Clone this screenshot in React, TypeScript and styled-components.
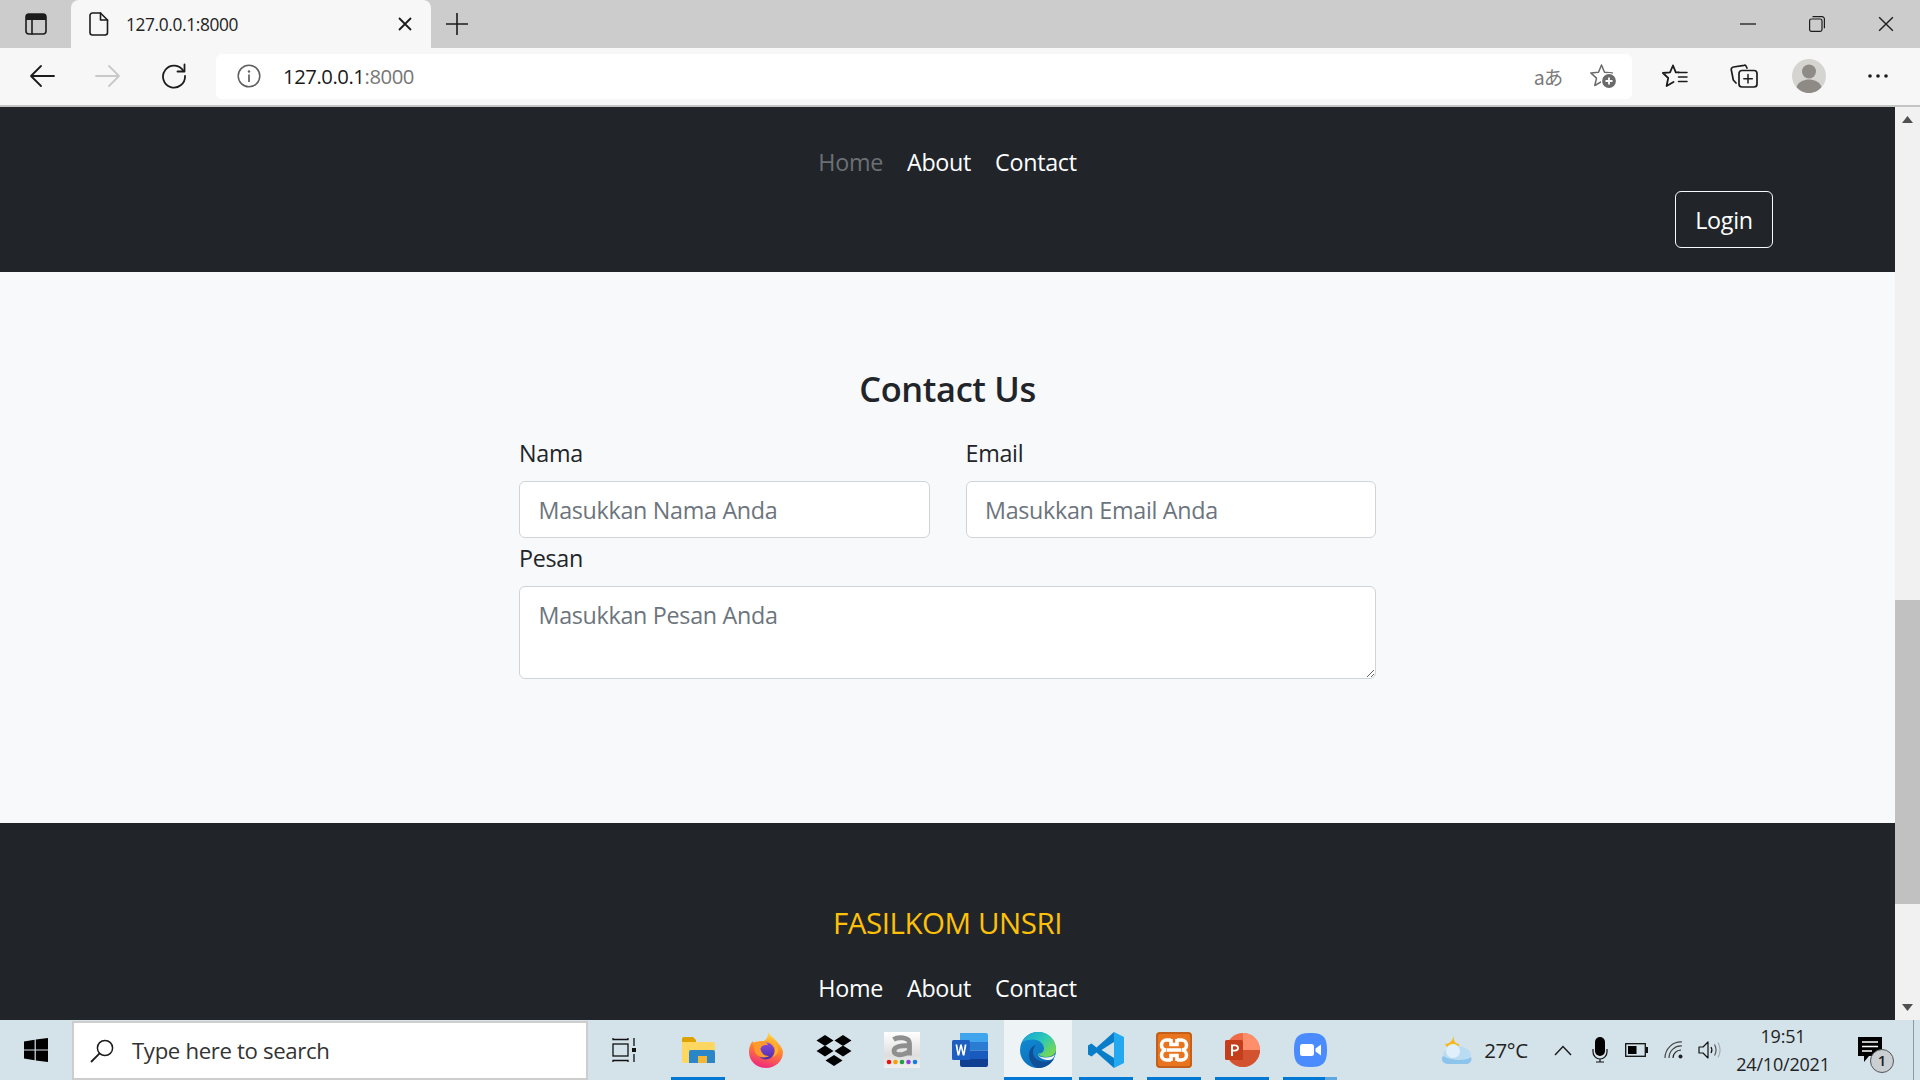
import React from "react";
import styled, { createGlobalStyle } from "styled-components";

const Global = createGlobalStyle`
  html, body { margin: 0; padding: 0; background: #f8f9fa; overflow: hidden; }
  * { box-sizing: border-box; }
  #root { width: 1920px; height: 1080px; }
`;

const UI = `"Open Sans", "Noto Sans", "Liberation Sans", sans-serif`;

const Screen = styled.div`
  width: 1920px;
  height: 1080px;
  display: flex;
  flex-direction: column;
  overflow: hidden;
  font-family: ${UI};
`;

/* ---------- browser chrome ---------- */
const TabStrip = styled.div`
  height: 48px;
  flex: none;
  background: #cccccc;
  display: flex;
  align-items: center;
`;
const StripButton = styled.div<{ $w: number }>`
  width: ${(p) => p.$w}px;
  height: 48px;
  flex: none;
  display: flex;
  align-items: center;
  justify-content: center;
`;
const Tab = styled.div`
  width: 360px;
  height: 48px;
  flex: none;
  background: #f7f7f7;
  border-radius: 8px 8px 0 0;
  display: flex;
  align-items: center;
  padding: 0 19px 0 18px;
`;
const TabTitle = styled.span`
  font-size: 17.3px;
  letter-spacing: -0.35px;
  color: #222;
  margin-left: 17px;
  flex: 1;
`;
const StripFill = styled.div`
  flex: 1;
`;
const Toolbar = styled.div`
  height: 59px;
  flex: none;
  background: #f7f7f7;
  border-bottom: 2px solid #c4c4c4;
  display: flex;
  align-items: center;
  padding-bottom: 1px;
`;
const ToolButton = styled.div<{ $w: number }>`
  width: ${(p) => p.$w}px;
  flex: none;
  display: flex;
  align-items: center;
  justify-content: center;
`;
const AddressBar = styled.div`
  width: 1416px;
  height: 45px;
  flex: none;
  background: #fff;
  border-radius: 6px;
  display: flex;
  align-items: center;
`;
const UrlText = styled.span`
  font-size: 20.3px;
  letter-spacing: -0.45px;
  color: #1a1a1a;
  margin-left: 1px;
  flex: 1;
`;
const UrlPort = styled.span`
  color: #767676;
`;
const TranslateGlyph = styled.span`
  font-family: "Noto Sans CJK JP", "Open Sans", sans-serif;
  font-size: 19.5px;
  letter-spacing: -1px;
  color: #7a7a7a;
  width: 52px;
  text-align: center;
`;

/* ---------- page ---------- */
const Viewport = styled.div`
  flex: 1;
  min-height: 0;
  display: flex;
`;
const Page = styled.div`
  flex: 1;
  min-width: 0;
  display: flex;
  flex-direction: column;
  overflow: hidden;
`;
const NavBar = styled.header`
  height: 165px;
  flex: none;
  background: #212529;
  display: flex;
  flex-direction: column;
  padding: 35px 122px 0 0;
`;
const NavLinks = styled.nav`
  display: flex;
  justify-content: center;
  gap: 24px;
  height: 40px;
  align-items: center;
`;
const NavLink = styled.a<{ $muted?: boolean }>`
  font-size: 23.3px;
  letter-spacing: -0.3px;
  color: ${(p) => (p.$muted ? "#6c7075" : "#fff")};
  text-decoration: none;
`;
const NavLinksOffset = styled.div`
  margin-right: -122px;
`;
const LoginRow = styled.div`
  display: flex;
  justify-content: flex-end;
  margin-top: 9px;
`;
const LoginButton = styled.button`
  width: 98px;
  height: 57px;
  background: transparent;
  border: 1.5px solid #f8f9fa;
  border-radius: 6px;
  color: #fff;
  font-family: ${UI};
  font-size: 23.3px;
  letter-spacing: -0.3px;
  padding: 1px 0 0;
`;
const Main = styled.main`
  height: 551px;
  flex: none;
  background: #f8f9fa;
  display: flex;
  flex-direction: column;
  align-items: center;
  padding-top: 92px;
`;
const Heading = styled.h2`
  margin: 0;
  font-size: 34.4px;
  line-height: 50px;
  font-weight: 600;
  letter-spacing: -0.35px;
  color: #212529;
`;
const Form = styled.form`
  width: 857px;
  margin-top: 21px;
  display: grid;
  grid-template-columns: 1fr 1fr;
  column-gap: 36px;
`;
const Field = styled.div<{ $wide?: boolean }>`
  grid-column: ${(p) => (p.$wide ? "1 / -1" : "auto")};
  margin-top: ${(p) => (p.$wide ? 2 : 0)}px;
  display: flex;
  flex-direction: column;
`;
const Label = styled.label`
  font-size: 23.3px;
  letter-spacing: -0.3px;
  line-height: 36px;
  color: #212529;
  margin-bottom: 10px;
`;
const fieldBase = `
  border: 1.5px solid #ced4da;
  border-radius: 6px;
  background: #fff;
  font-family: ${UI};
  font-size: 23.3px;
  letter-spacing: -0.3px;
  color: #212529;
  padding: 9px 18.5px;
  outline: none;
  width: 100%;
  &::placeholder { color: #6c757d; opacity: 1; }
`;
const TextInput = styled.input`
  ${fieldBase}
  height: 57px;
`;
const TextArea = styled.textarea`
  ${fieldBase}
  padding-top: 12px;
  height: 93px;
  resize: vertical;
  display: block;
`;
const Footer = styled.footer`
  flex: 1;
  background: #212529;
  display: flex;
  flex-direction: column;
  align-items: center;
  padding-top: 77px;
`;
const Brand = styled.div`
  font-size: 29.5px;
  letter-spacing: -0.45px;
  line-height: 46px;
  color: #ffc107;
`;
const FooterLinks = styled(NavLinks)`
  margin-top: 22px;
`;

/* ---------- scrollbar ---------- */
const ScrollBar = styled.div`
  width: 25px;
  flex: none;
  background: #f1f1f1;
  display: flex;
  flex-direction: column;
  align-items: center;
`;
const ScrollArrow = styled.div`
  height: 25px;
  flex: none;
  display: flex;
  align-items: center;
  justify-content: center;
`;
const ScrollSpacer = styled.div<{ $h: number }>`
  height: ${(p) => p.$h}px;
  flex: none;
`;
const ScrollThumb = styled.div`
  width: 100%;
  height: 304px;
  flex: none;
  background: #c1c1c1;
`;

/* ---------- taskbar ---------- */
const Taskbar = styled.div`
  height: 60px;
  flex: none;
  background: #d4e2ea;
  display: flex;
  align-items: stretch;
  position: relative;
`;
const StartButton = styled.div`
  width: 72px;
  flex: none;
  display: flex;
  align-items: center;
  justify-content: center;
`;
const SearchBox = styled.div`
  width: 516px;
  flex: none;
  margin-top: 1px;
  background: #fff;
  border: 2px solid #cdcdcd;
  display: flex;
  align-items: center;
  padding-left: 16px;
`;
const SearchText = styled.span`
  font-size: 22.2px;
  letter-spacing: -0.35px;
  color: #333;
  margin-left: 18px;
`;
const TaskViewButton = styled.div`
  width: 68px;
  flex: none;
  margin-left: 2px;
  margin-right: 6px;
  display: flex;
  align-items: center;
  justify-content: center;
`;
const TaskButton = styled.div<{ $open?: boolean; $active?: boolean; $stacked?: boolean }>`
  width: 68px;
  flex: none;
  position: relative;
  display: flex;
  align-items: center;
  justify-content: center;
  background: ${(p) => (p.$active ? "#eef3f6" : "transparent")};
  &::after {
    content: "";
    display: ${(p) => (p.$open ? "block" : "none")};
    position: absolute;
    bottom: 0;
    left: ${(p) => (p.$active ? 0 : 7)}px;
    right: ${(p) => (p.$active ? 0 : 7)}px;
    height: 3px;
    background: ${(p) =>
      p.$stacked ? "linear-gradient(90deg, #0078d4 78%, #5fa8e0 78%)" : "#0078d4"};
  }
`;
const Tray = styled.div`
  margin-left: auto;
  display: flex;
  align-items: stretch;
  padding-right: 20px;
  position: relative;
`;
const TrayItem = styled.div<{ $w: number }>`
  width: ${(p) => p.$w}px;
  flex: none;
  display: flex;
  align-items: center;
  justify-content: center;
  position: relative;
`;
const TempText = styled.span`
  font-size: 20.5px;
  letter-spacing: -0.4px;
  color: #222;
  margin-right: 8px;
`;
const Clock = styled.div`
  display: flex;
  flex-direction: column;
  align-items: center;
  font-size: 18px;
  letter-spacing: -0.2px;
  line-height: 28px;
  color: #222;
`;
const NotifBadge = styled.span`
  position: absolute;
  left: 31px;
  top: 29px;
  width: 24px;
  height: 24px;
  border-radius: 50%;
  background: #c9cfd2;
  border: 1.5px solid #555;
  font-size: 15px;
  font-weight: 600;
  line-height: 20px;
  text-align: center;
  color: #222;
`;
const EdgeLine = styled.div`
  position: absolute;
  right: 6px;
  top: 0;
  bottom: 0;
  width: 1px;
  background: #8f9a9f;
`;

/* ---------- icons ---------- */
const Stroke = { fill: "none", stroke: "#1c1c1c", strokeWidth: 1.6, strokeLinecap: "round" as const, strokeLinejoin: "round" as const };

const SidebarIcon = () => (
  <svg width="22" height="22" viewBox="0 0 22 22">
    <rect x="1" y="1" width="20" height="20" rx="3" {...Stroke} />
    <path d="M1 4a3 3 0 0 1 3-3h14a3 3 0 0 1 3 3v3H1z" fill="#1c1c1c" />
    <path d="M7 7v14" {...Stroke} />
  </svg>
);
const FileIcon = () => (
  <svg width="20" height="24" viewBox="0 0 20 24">
    <path d="M3.500 1h8l7 7v12.500a2.500 2.500 0 0 1-2.500 2.500H3.500A2.500 2.500 0 0 1 1 20.500V3.500A2.500 2.500 0 0 1 3.500 1z" {...Stroke} />
    <path d="M11.500 1v7h7" {...Stroke} />
  </svg>
);
const CloseX = ({ s = 14, w = 1.8 }: { s?: number; w?: number }) => (
  <svg width={s} height={s} viewBox="0 0 14 14">
    <path d="M1 1l12 12M13 1L1 13" fill="none" stroke="#1c1c1c" strokeWidth={w} />
  </svg>
);
const PlusIcon = () => (
  <svg width="22" height="22" viewBox="0 0 22 22">
    <path d="M11 0v22M0 11h22" fill="none" stroke="#1c1c1c" strokeWidth="1.6" />
  </svg>
);
const MinIcon = () => (
  <svg width="16" height="2" viewBox="0 0 16 2">
    <path d="M0 1h16" stroke="#1c1c1c" strokeWidth="1.3" />
  </svg>
);
const RestoreIcon = () => (
  <svg width="16" height="16" viewBox="0 0 16 16">
    <rect x="0.600" y="3" width="12.400" height="12.400" rx="1.800" fill="none" stroke="#1c1c1c" strokeWidth="1.200" />
    <path d="M3.500 0.700h9.500a2.400 2.400 0 0 1 2.400 2.400v9.200" fill="none" stroke="#1c1c1c" strokeWidth="1.200" />
  </svg>
);
const ArrowIcon = ({ dir, color }: { dir: "l" | "r"; color: string }) => (
  <svg width="26" height="24" viewBox="0 0 26 24" style={dir === "r" ? { transform: "scaleX(-1)" } : undefined}>
    <path d="M25 12H2M12 2L2 12l10 10" fill="none" stroke={color} strokeWidth="1.800" strokeLinecap="round" strokeLinejoin="round" />
  </svg>
);
const RefreshIcon = () => (
  <svg width="26" height="26" viewBox="0 0 26 26">
    <path d="M22.500 8A11 11 0 1 0 24 13" {...Stroke} strokeWidth={1.8} />
    <path d="M23.500 1.500V8.500H16.500" {...Stroke} strokeWidth={1.8} />
  </svg>
);
const InfoIcon = () => (
  <svg width="24" height="24" viewBox="0 0 24 24">
    <circle cx="12" cy="12" r="10.800" fill="none" stroke="#5f5f5f" strokeWidth="1.500" />
    <circle cx="12" cy="7.500" r="1.200" fill="#5f5f5f" />
    <path d="M12 10.500v7.500" stroke="#5f5f5f" strokeWidth="1.700" />
  </svg>
);
const StarPlusIcon = () => (
  <svg width="26" height="24" viewBox="0 0 26 24">
    <path d="M11.500 1l3 7.200 7.800.7-5.800 5.200 1.700 7.400-6.700-3.900-6.700 3.900 1.700-7.400L.8 8.900l7.700-.7z" fill="none" stroke="#6a6a6a" strokeWidth="1.500" strokeLinejoin="round" />
    <circle cx="19" cy="17" r="7.500" fill="#6a6a6a" stroke="#fff" strokeWidth="1.200" />
    <path d="M19 13.500v7M15.500 17h7" stroke="#fff" strokeWidth="1.800" />
  </svg>
);
const FavoritesIcon = () => (
  <svg width="26" height="24" viewBox="0 0 26 24">
    <path d="M11 1.500L8 8.300.9 9l5.300 5-1.600 8 6.900-4M11 1.500l2.800 6.800h3" {...Stroke} strokeWidth={1.800} />
    <path d="M16.500 8.500h8.500M16.500 13h8.500M16.500 17.500h8.500" {...Stroke} strokeWidth={1.500} />
  </svg>
);
const CollectionsIcon = () => (
  <svg width="28" height="24" viewBox="0 0 28 24">
    <rect x="9" y="6.500" width="18" height="16.500" rx="3" {...Stroke} strokeWidth={1.700} />
    <path d="M18 10.500v8.500M13.800 14.800h8.500" {...Stroke} strokeWidth={1.500} />
    <path d="M17 4l-.7-1.500c-.4-1-1.200-1.500-2.200-1.200L3.500 3C2 3.300 1 4.500 1.300 6l2 10 2.700 3" {...Stroke} strokeWidth={1.700} />
  </svg>
);
const AvatarIcon = () => (
  <svg width="34" height="34" viewBox="0 0 34 34">
    <circle cx="17" cy="17" r="17" fill="#d6d4d1" />
    <circle cx="17" cy="12.500" r="7" fill="#8e8a86" />
    <path d="M4.500 28c2-5.500 7.500-7.500 12.500-7.500s10.500 2 12.500 7.500c-3 3.700-7.500 6-12.500 6S7.500 31.700 4.500 28z" fill="#8e8a86" />
  </svg>
);
const DotsIcon = () => (
  <svg width="20" height="4" viewBox="0 0 20 4">
    <circle cx="2" cy="2" r="1.800" fill="#1c1c1c" />
    <circle cx="10" cy="2" r="1.800" fill="#1c1c1c" />
    <circle cx="18" cy="2" r="1.800" fill="#1c1c1c" />
  </svg>
);
const Triangle = ({ up }: { up?: boolean }) => (
  <svg width="11" height="7" viewBox="0 0 11 7">
    <path d={up ? "M5.500 0L11 7H0z" : "M0 0h11L5.500 7z"} fill="#505050" />
  </svg>
);
const WindowsLogo = () => (
  <svg width="24" height="24" viewBox="0 0 24 24">
    <path d="M0 3.400L10.600 1.800V11.400H0zM11.800 1.600L24 0V11.400H11.800zM0 12.600H10.600V22.200L0 20.600zM11.800 12.600H24V24L11.800 22.400z" fill="#000" />
  </svg>
);
const SearchIcon = () => (
  <svg width="24" height="24" viewBox="0 0 24 24">
    <circle cx="15" cy="9" r="7.600" fill="none" stroke="#1c1c1c" strokeWidth="1.500" />
    <path d="M9.600 14.400L1 23" stroke="#1c1c1c" strokeWidth="1.800" />
  </svg>
);
const TaskViewIcon = () => (
  <svg width="24" height="26" viewBox="0 0 24 26">
    <path d="M1 1v1.500h15V1M1 25v-1.500h15V25" fill="none" stroke="#111" strokeWidth="1.300" />
    <rect x="1" y="7" width="15" height="12" fill="none" stroke="#111" strokeWidth="1.300" />
    <path d="M22 1v8M22 17v8" stroke="#111" strokeWidth="1.300" />
    <rect x="20" y="11" width="4" height="4" fill="#111" />
  </svg>
);
const FolderLogo = () => (
  <svg width="33" height="26" viewBox="0 0 33 26">
    <path d="M0 2a2 2 0 0 1 2-2h9l3 3v3H0z" fill="#dfa200" />
    <path d="M0 5h31a2 2 0 0 1 2 2v19H2a2 2 0 0 1-2-2z" fill="#fdd75f" />
    <path d="M7 26V15a2 2 0 0 1 2-2h22a2 2 0 0 1 2 2v11h-8v-7h-9v7z" fill="#2a86c8" />
    <path d="M16 19h9v7h-9z" fill="#f4b733" />
  </svg>
);
const FirefoxLogo = () => (
  <svg width="34" height="36" viewBox="0 0 34 36">
    <defs>
      <linearGradient id="ff1" x1="0.700" y1="0" x2="0.400" y2="1">
        <stop offset="0" stopColor="#ffe03b" />
        <stop offset="0.450" stopColor="#ff8a2b" />
        <stop offset="1" stopColor="#f0277f" />
      </linearGradient>
      <linearGradient id="ff2" x1="0.500" y1="0" x2="0.500" y2="1">
        <stop offset="0" stopColor="#8a4ad8" />
        <stop offset="1" stopColor="#4a2fa8" />
      </linearGradient>
    </defs>
    <path d="M19 0c1.500 3.500 5 5 8 8.500 4 4.500 7 8.500 7 11.500 0 9-7.500 16-17 16S0 29 0 20c0-5 1.500-8.500 4-11 .3 2 1 3 2 3.500C8 10 11 9 15 9c3-2 4.500-5 4-9z" fill="url(#ff1)" />
    <circle cx="17" cy="19" r="8.500" fill="url(#ff2)" />
    <path d="M4 11c4-2.500 13-3 15 2-4-.5-6.500 1-7.500 3.500C12 21 15 24 20 24c-5 3-12 1-14-4-1-3-1.500-6-2-9z" fill="#ff9a2b" />
    <path d="M24 11c3 4 3 11-1 14 5-1 7-6 6-10-1-2-3-4-5-4z" fill="#ffb02e" />
  </svg>
);
const DropboxLogo = () => (
  <svg width="36" height="31" viewBox="0 0 36 31">
    <path d="M9 0l8.500 5.500L9 11 .5 5.500zM27 0l8.500 5.500L27 11l-8.500-5.500zM9 10.500l8.500 5.500L9 21.500.5 16zM27 10.500l8.500 5.500-8.500 5.500-8.500-5.500zM18 20l8.500 5.500L18 31l-8.500-5.500z" fill="#000" />
  </svg>
);
const AmazonLogo = () => (
  <svg width="36" height="36" viewBox="0 0 36 36">
    <defs>
      <linearGradient id="amz" x1="0" y1="0" x2="0" y2="1">
        <stop offset="0" stopColor="#ffffff" />
        <stop offset="0.650" stopColor="#dedede" />
        <stop offset="1" stopColor="#f0f0f0" />
      </linearGradient>
    </defs>
    <rect width="36" height="36" fill="url(#amz)" />
    <path d="M9.500 7.500c4-2.500 16-3 16 4v12M25.500 13.500c-9 0-15.500 1-15.500 5.500 0 5 10 5 15.500 0" fill="none" stroke="#8f8f8f" strokeWidth="4.800" />
    <circle cx="5" cy="30" r="2.300" fill="#f01010" />
    <circle cx="11.500" cy="30" r="2.300" fill="#f5a000" />
    <circle cx="18" cy="30" r="2.300" fill="#20a040" />
    <circle cx="24.500" cy="30" r="2.300" fill="#9040d8" />
    <circle cx="31" cy="30" r="2.300" fill="#1080e0" />
  </svg>
);
const WordLogo = () => (
  <svg width="36" height="34" viewBox="0 0 36 34">
    <path d="M8 0h26a2 2 0 0 1 2 2v7H8z" fill="#41a5ee" />
    <path d="M8 9h28v8.500H8z" fill="#2b7cd3" />
    <path d="M8 17.500h28V26H8z" fill="#185abd" />
    <path d="M8 26h28v6a2 2 0 0 1-2 2H10a2 2 0 0 1-2-2z" fill="#103f91" />
    <rect x="0" y="7" width="18" height="20" rx="1.500" fill="#1c5fc0" />
    <path d="M3.500 11.500l2 11h1.800l1.700-7.500 1.700 7.500h1.800l2-11h-1.800l-1.200 7.500-1.700-7.500h-1.600l-1.700 7.500-1.200-7.500z" fill="#fff" />
  </svg>
);
const EdgeLogo = () => (
  <svg width="36" height="36" viewBox="0 0 36 36">
    <defs>
      <linearGradient id="edge1" x1="0" y1="0" x2="1" y2="0.700">
        <stop offset="0" stopColor="#18a0d8" />
        <stop offset="0.550" stopColor="#2cc8b8" />
        <stop offset="1" stopColor="#78d850" />
      </linearGradient>
      <linearGradient id="edge2" x1="0" y1="0" x2="0.500" y2="1">
        <stop offset="0" stopColor="#1290d8" />
        <stop offset="1" stopColor="#0c6cb8" />
      </linearGradient>
    </defs>
    <circle cx="18" cy="18" r="18" fill="url(#edge2)" />
    <path d="M2 10C5 4 11 0 18 0c10 0 18 7 18 17 0 5-4 8-10 8-4 0-7-1.500-8-3.500 3 .5 6-1.500 6-5 0-5-5-9-11-9-5 0-9 1-11 2.500z" fill="url(#edge1)" />
    <path d="M16 13c-4 1-7 5-7 10 0 5 3 10 8 13 8 0 13-3 17-9-3 2-7 3-11 2.500C17 29 13 25 13 20c0-3 1-5 3-7z" fill="#0f4f98" />
    <path d="M17.500 22c1 2.500 4.500 3.500 8.500 3.500 4 0 7-1 9-3-1 3.500-3 5.500-6 5.500-5 0-10-2-11.500-6z" fill="#eef3f6" />
  </svg>
);
const VsCodeLogo = () => (
  <svg width="36" height="36" viewBox="0 0 36 36">
    <path d="M26 0L8.500 15.500 3.500 11.500 0 13.500v9l3.500 2 5-4L26 36V26L13.500 18 26 10z" fill="#0a7dc8" />
    <path d="M26 0l10 5v26l-10 5z" fill="#24a9f0" />
  </svg>
);
const XamppLogo = () => (
  <svg width="36" height="36" viewBox="0 0 36 36">
    <rect width="36" height="36" rx="4" fill="#e8741e" />
    <rect x="1" y="1" width="34" height="34" rx="3" fill="none" stroke="#b85a18" strokeWidth="1.500" />
    <path d="M15 8H10.500a5 5 0 0 0 0 10 5 5 0 0 0 0 10H15M21 8h4.500a5 5 0 0 1 0 10 5 5 0 0 1 0 10H21M11 18h14M15 7v5.500h6V7M15 29v-5.500h6V29" fill="none" stroke="#fff" strokeWidth="3.600" />
  </svg>
);
const PowerPointLogo = () => (
  <svg width="35" height="34" viewBox="0 0 35 34">
    <circle cx="18" cy="17" r="17" fill="#ed6c47" />
    <path d="M18 0a17 17 0 0 1 17 17H18z" fill="#ff8f6b" />
    <path d="M35 17a17 17 0 0 1-34 0h17z" fill="#d35230" />
    <rect x="0" y="7" width="18" height="20" rx="1.500" fill="#c43e1c" />
    <path d="M6 11.500h4c2.500 0 4 1.500 4 3.500s-1.500 3.500-4 3.500H8V23H6zM8 13.300v3.400h1.800c1.300 0 2.200-.6 2.200-1.700s-.9-1.700-2.200-1.700z" fill="#fff" />
  </svg>
);
const ZoomLogo = () => (
  <svg width="33" height="34" viewBox="0 0 33 34">
    <path d="M16.500 0C28 0 33 3 33 17s-5 17-16.500 17S0 31 0 17 5 0 16.500 0z" fill="#4a8cff" />
    <rect x="6" y="11" width="14" height="12" rx="2.500" fill="#fff" />
    <path d="M21.500 15.500L27 11.500v11l-5.500-4z" fill="#fff" />
  </svg>
);
const WeatherIcon = () => (
  <svg width="34" height="30" viewBox="0 0 34 30">
    <path d="M15 0c-1 5 1 9 5 9 .5 3-2 6-5 6-4 0-7-2-9-6 4 0 8-3 9-9z" fill="#f6b81c" />
    <ellipse cx="18" cy="20" rx="14" ry="9" fill="#b9dcf2" />
    <circle cx="14" cy="16" r="7" fill="#dff0fb" />
    <path d="M4 21a5 5 0 0 0 4 8h20a5 5 0 0 0 4-7c-4 4-20 4-28-1z" fill="#8cc4ec" />
  </svg>
);
const ChevronIcon = () => (
  <svg width="18" height="11" viewBox="0 0 18 11">
    <path d="M1 10l8-8.500 8 8.500" fill="none" stroke="#1c1c1c" strokeWidth="1.500" />
  </svg>
);
const MicIcon = () => (
  <svg width="16" height="26" viewBox="0 0 16 26">
    <rect x="3" y="0" width="10" height="19" rx="5" fill="#000" />
    <path d="M1 12v3a7 7 0 0 0 14 0v-3M8 22v3M4 25h8" fill="none" stroke="#111" strokeWidth="1.200" />
  </svg>
);
const BatteryIcon = () => (
  <svg width="23" height="14" viewBox="0 0 23 14">
    <rect x="0.700" y="0.700" width="19.600" height="12.600" fill="none" stroke="#111" strokeWidth="1.300" />
    <rect x="3" y="3" width="8.500" height="8" fill="#000" />
    <rect x="21" y="4" width="2" height="6" fill="#111" />
  </svg>
);
const WifiIcon = () => (
  <svg width="19" height="18" viewBox="0 0 19 18">
    <path d="M1 17A16 16 0 0 1 18 1M5 17A12 12 0 0 1 18 5" fill="none" stroke="#444" strokeWidth="1.200" />
    <path d="M9 17A8 8 0 0 1 17 9" fill="none" stroke="#222" strokeWidth="1.200" />
    <circle cx="16.500" cy="15.500" r="2" fill="#222" />
  </svg>
);
const SpeakerIcon = () => (
  <svg width="23" height="18" viewBox="0 0 23 18">
    <path d="M1 6h4l5-5v16l-5-5H1z" fill="none" stroke="#111" strokeWidth="1.200" strokeLinejoin="round" />
    <path d="M13 6c1.200 2 1.200 4 0 6" fill="none" stroke="#111" strokeWidth="1.200" />
    <path d="M16.500 3.500c2 3.500 2 7.500 0 11" fill="none" stroke="#555" strokeWidth="1.200" />
    <path d="M20 1.500c2.800 5 2.800 10 0 15" fill="none" stroke="#aab" strokeWidth="1.200" />
  </svg>
);
const NotifIcon = () => (
  <svg width="24" height="26" viewBox="0 0 24 26">
    <path d="M0 0h24v19H11l-5 6v-6H0z" fill="#000" />
    <path d="M4 5h16M4 9.500h16M4 14h10" stroke="#fff" strokeWidth="1.300" />
  </svg>
);

const taskApps: { key: string; node: React.ReactNode; open?: boolean; active?: boolean; stacked?: boolean }[] = [
  { key: "folder", node: <FolderLogo />, open: true },
  { key: "firefox", node: <FirefoxLogo /> },
  { key: "dropbox", node: <DropboxLogo /> },
  { key: "amazon", node: <AmazonLogo /> },
  { key: "word", node: <WordLogo /> },
  { key: "edge", node: <EdgeLogo />, open: true, active: true },
  { key: "vscode", node: <VsCodeLogo />, open: true },
  { key: "xampp", node: <XamppLogo />, open: true },
  { key: "ppt", node: <PowerPointLogo />, open: true },
  { key: "zoom", node: <ZoomLogo />, open: true, stacked: true },
];

const links = ["Home", "About", "Contact"];

export default function App() {
  return (
    <Screen>
      <Global />
      <TabStrip>
        <StripButton $w={71}>
          <SidebarIcon />
        </StripButton>
        <Tab>
          <FileIcon />
          <TabTitle>127.0.0.1:8000</TabTitle>
          <CloseX />
        </Tab>
        <StripButton $w={52}>
          <PlusIcon />
        </StripButton>
        <StripFill />
        <StripButton $w={68}>
          <MinIcon />
        </StripButton>
        <StripButton $w={70}>
          <RestoreIcon />
        </StripButton>
        <StripButton $w={68}>
          <CloseX s={16} w={1.2} />
        </StripButton>
      </TabStrip>
      <Toolbar>
        <ToolButton $w={84}>
          <ArrowIcon dir="l" color="#1c1c1c" />
        </ToolButton>
        <ToolButton $w={48}>
          <ArrowIcon dir="r" color="#c9c9c9" />
        </ToolButton>
        <ToolButton $w={84}>
          <RefreshIcon />
        </ToolButton>
        <AddressBar>
          <ToolButton $w={66}>
            <InfoIcon />
          </ToolButton>
          <UrlText>
            127.0.0.1<UrlPort>:8000</UrlPort>
          </UrlText>
          <TranslateGlyph>aあ</TranslateGlyph>
          <ToolButton $w={58}>
            <StarPlusIcon />
          </ToolButton>
        </AddressBar>
        <ToolButton $w={85}>
          <FavoritesIcon />
        </ToolButton>
        <ToolButton $w={53}>
          <CollectionsIcon />
        </ToolButton>
        <ToolButton $w={78}>
          <AvatarIcon />
        </ToolButton>
        <ToolButton $w={60}>
          <DotsIcon />
        </ToolButton>
      </Toolbar>
      <Viewport>
        <Page>
          <NavBar>
            <NavLinksOffset>
              <NavLinks>
                {links.map((l, i) => (
                  <NavLink key={l} $muted={i === 0}>
                    {l}
                  </NavLink>
                ))}
              </NavLinks>
            </NavLinksOffset>
            <LoginRow>
              <LoginButton type="button">Login</LoginButton>
            </LoginRow>
          </NavBar>
          <Main>
            <Heading>Contact Us</Heading>
            <Form>
              <Field>
                <Label>Nama</Label>
                <TextInput placeholder="Masukkan Nama Anda" />
              </Field>
              <Field>
                <Label>Email</Label>
                <TextInput placeholder="Masukkan Email Anda" />
              </Field>
              <Field $wide>
                <Label>Pesan</Label>
                <TextArea placeholder="Masukkan Pesan Anda" />
              </Field>
            </Form>
          </Main>
          <Footer>
            <Brand>FASILKOM UNSRI</Brand>
            <FooterLinks>
              {links.map((l) => (
                <NavLink key={l}>{l}</NavLink>
              ))}
            </FooterLinks>
          </Footer>
        </Page>
        <ScrollBar>
          <ScrollArrow>
            <Triangle up />
          </ScrollArrow>
          <ScrollSpacer $h={468} />
          <ScrollThumb />
          <ScrollSpacer $h={91} />
          <ScrollArrow>
            <Triangle />
          </ScrollArrow>
        </ScrollBar>
      </Viewport>
      <Taskbar>
        <StartButton>
          <WindowsLogo />
        </StartButton>
        <SearchBox>
          <SearchIcon />
          <SearchText>Type here to search</SearchText>
        </SearchBox>
        <TaskViewButton>
          <TaskViewIcon />
        </TaskViewButton>
        {taskApps.map((a) => (
          <TaskButton key={a.key} $open={a.open} $active={a.active} $stacked={a.stacked}>
            {a.node}
          </TaskButton>
        ))}
        <Tray>
          <TrayItem $w={40}>
            <WeatherIcon />
          </TrayItem>
          <TrayItem $w={68}>
            <TempText>27°C</TempText>
          </TrayItem>
          <TrayItem $w={38}>
            <ChevronIcon />
          </TrayItem>
          <TrayItem $w={35}>
            <MicIcon />
          </TrayItem>
          <TrayItem $w={38}>
            <BatteryIcon />
          </TrayItem>
          <TrayItem $w={36}>
            <WifiIcon />
          </TrayItem>
          <TrayItem $w={36}>
            <SpeakerIcon />
          </TrayItem>
          <TrayItem $w={112}>
            <Clock>
              <span>19:51</span>
              <span>24/10/2021</span>
            </Clock>
          </TrayItem>
          <TrayItem $w={61}>
            <NotifIcon />
            <NotifBadge>1</NotifBadge>
          </TrayItem>
        </Tray>
        <EdgeLine />
      </Taskbar>
    </Screen>
  );
}
